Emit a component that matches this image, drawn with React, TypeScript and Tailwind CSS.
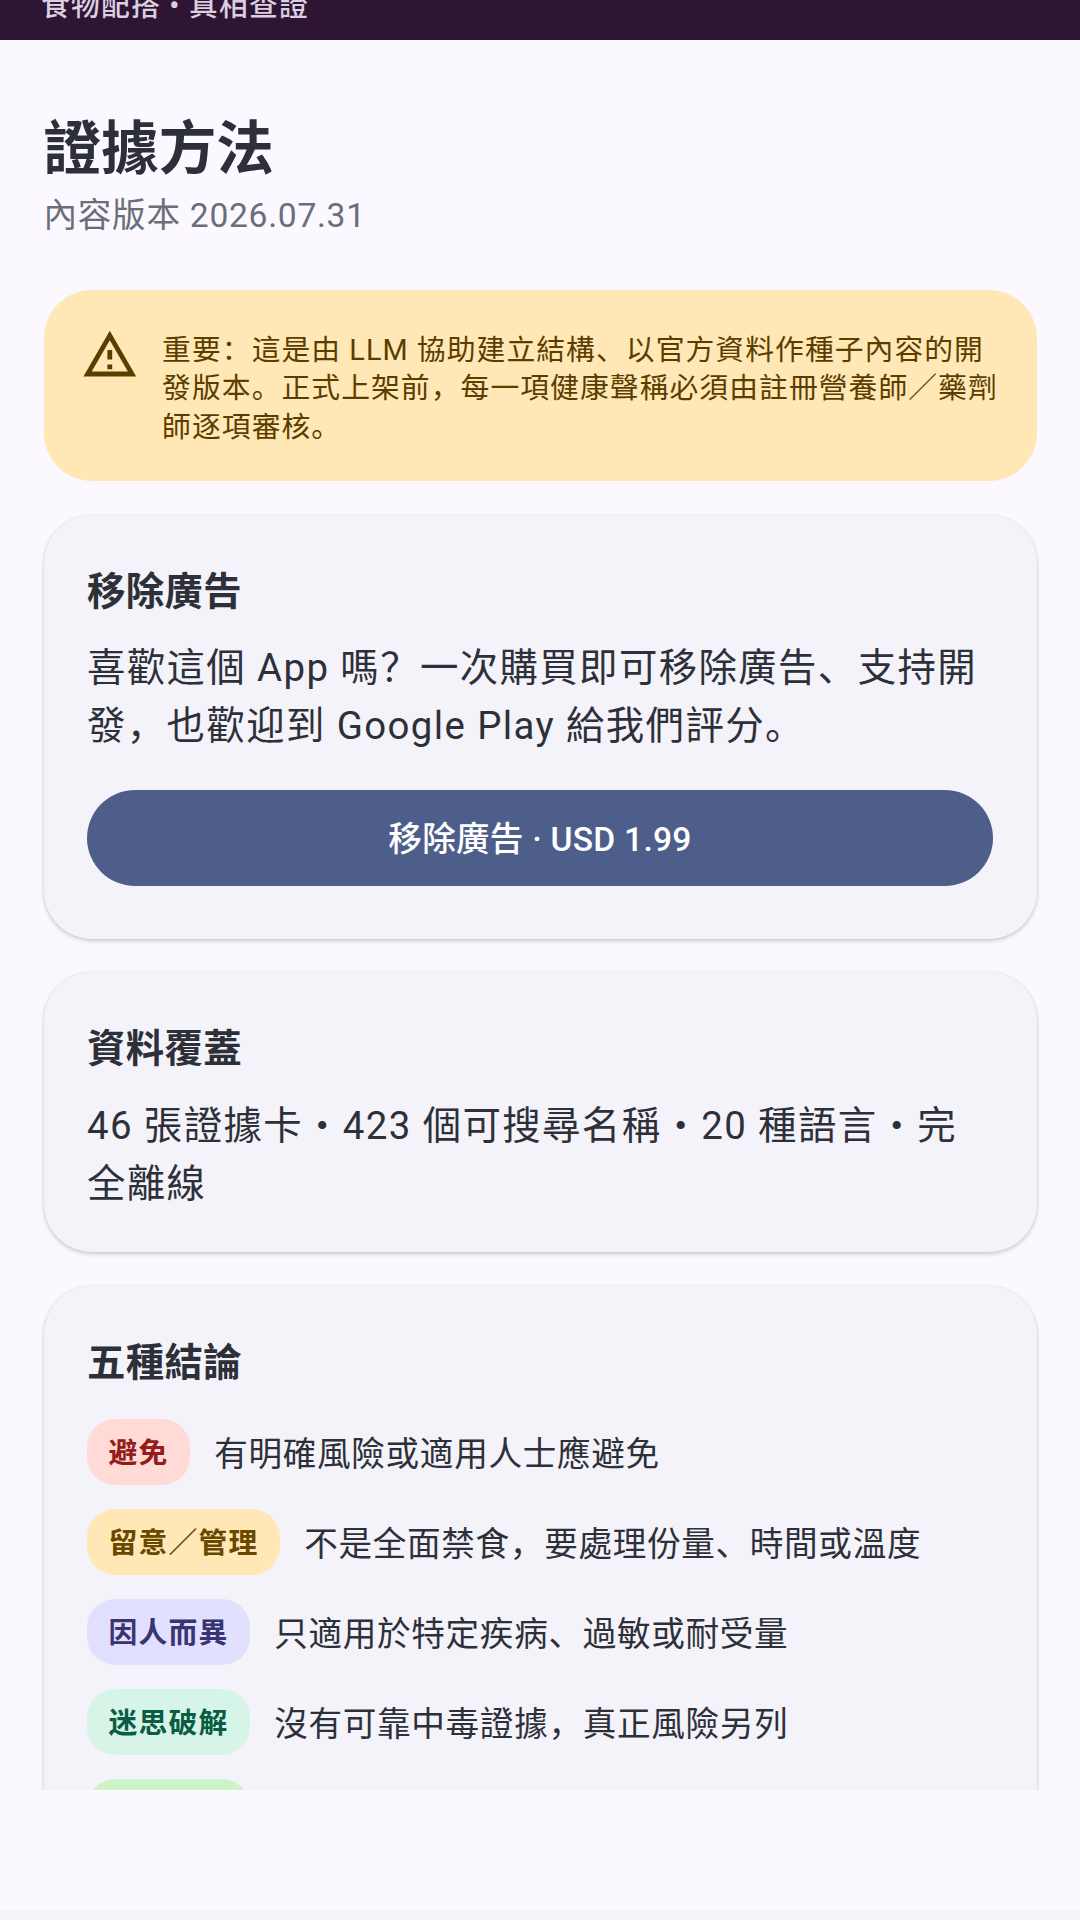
const rows = [
  { label: "避免", text: "有明確風險或適用人士應避免", bg: "bg-[#ffdad6]", fg: "text-[#931d1a]" },
  { label: "留意／管理", text: "不是全面禁食，要處理份量、時間或溫度", bg: "bg-[#ffe8b5]", fg: "text-[#694800]" },
  { label: "因人而異", text: "只適用於特定疾病、過敏或耐受量", bg: "bg-[#e2e0ff]", fg: "text-[#393472]" },
  { label: "迷思破解", text: "沒有可靠中毒證據，真正風險另列", bg: "bg-[#d6f5e8]", fg: "text-[#0a5c44]" },
  { label: "通常安全", text: "一般份量下沒有明確風險", bg: "bg-[#cdf3c6]", fg: "text-[#1d5c1d]" },
];

function Pill({ label, bg, fg }: { label: string; bg: string; fg: string }) {
  return (
    <span className={`${bg} ${fg} shrink-0 h-[66px] px-[21.6px] pt-[3px] rounded-[28px] flex items-center text-[28.8px] leading-[38.4px] font-bold tracking-[1.2px]`}>
      {label}
    </span>
  );
}

function CardTitle({ children }: { children: string }) {
  return <h2 className="text-[38.4px] leading-[57.6px] font-bold tracking-[0.36px] text-[#2e3039]">{children}</h2>;
}

const cardClass = "mt-[33.6px] shrink-0 bg-[#f3f3f9] rounded-[48px] px-[43.5px] pt-[48px] shadow-[0_2px_4px_rgba(0,0,0,0.18),0_0_2px_rgba(0,0,0,0.08)]";

export default function App() {
  return (
    <div className="font-['Roboto','Noto_Sans_CJK_SC',sans-serif] w-[1080px] h-[1920px] flex flex-col bg-[#fbf8ff] overflow-hidden">
      <header className="h-[40px] shrink-0 bg-[#2e1534] overflow-hidden px-[41px]">
        <p className="-mt-[13px] text-[28.8px] leading-[38.4px] font-medium tracking-[1.2px] text-[#dbcfe0]">食物配搭 • 真相查證</p>
      </header>

      <main className="h-[1750px] shrink-0 overflow-hidden px-[43.5px] pt-[72px] flex flex-col">
        <h1 className="text-[57.6px] leading-[76.8px] font-bold text-[#2e3039]">證據方法</h1>
        <p className="mt-[3px] text-[33.6px] leading-[48px] tracking-[0.73px] text-[#6b6e78]">內容版本 2026.07.31</p>

        <section className="mt-[50px] shrink-0 bg-[#ffe8b5] rounded-[48px] pl-[37px] pr-[38.4px] pt-[41px] pb-[35px] flex gap-[24px] text-[#5c3d00]">
          <svg viewBox="0 0 24 24" className="w-[57.6px] h-[57.6px] shrink-0 mt-[-5px]" fill="currentColor">
            <path d="M12 5.99L19.53 19H4.47L12 5.99M12 2L1 21h22L12 2zm1 14h-2v2h2v-2zm0-6h-2v4h2v-4z" />
          </svg>
          <p className="text-[28.8px] leading-[38.4px] tracking-[1.05px]">
            重要：這是由 LLM 協助建立結構、以官方資料作種子內容的開發版本。正式上架前，每一項健康聲稱必須由註冊營養師／藥劑師逐項審核。
          </p>
        </section>

        <section className={`${cardClass} pb-[53px]`}>
          <CardTitle>移除廣告</CardTitle>
          <p className="mt-[19.2px] text-[38.4px] leading-[57.6px] tracking-[1.4px] text-[#2e3039]">
            喜歡這個 App 嗎？一次購買即可移除廣告、支持開發，也歡迎到 Google Play 給我們評分。
          </p>
          <button className="mt-[35px] w-full h-[96px] pt-[6px] rounded-full bg-[#4d5e8a] text-white text-[33.6px] font-medium tracking-[0.24px]">
            移除廣告 · USD 1.99
          </button>
        </section>

        <section className={`${cardClass} pb-[40px]`}>
          <CardTitle>資料覆蓋</CardTitle>
          <p className="mt-[19.2px] text-[38.4px] leading-[57.6px] tracking-[1.4px] text-[#2e3039]">
            46 張證據卡・423 個可搜尋名稱・20 種語言・完全離線
          </p>
        </section>

        <section className={`${cardClass} pb-[38.4px]`}>
          <CardTitle>五種結論</CardTitle>
          <div className="mt-[27.5px] flex flex-col gap-[24px]">
            {rows.map((r) => (
              <div key={r.label} className="flex items-center gap-[24px]">
                <Pill label={r.label} bg={r.bg} fg={r.fg} />
                <span className="pt-[6px] text-[33.6px] leading-[48px] tracking-[0.7px] text-[#2e3039]">{r.text}</span>
              </div>
            ))}
          </div>
        </section>
      </main>

      <div className="flex-1" />
      <div className="h-[9px] shrink-0 bg-[#f3f3f9]" />
    </div>
  );
}
